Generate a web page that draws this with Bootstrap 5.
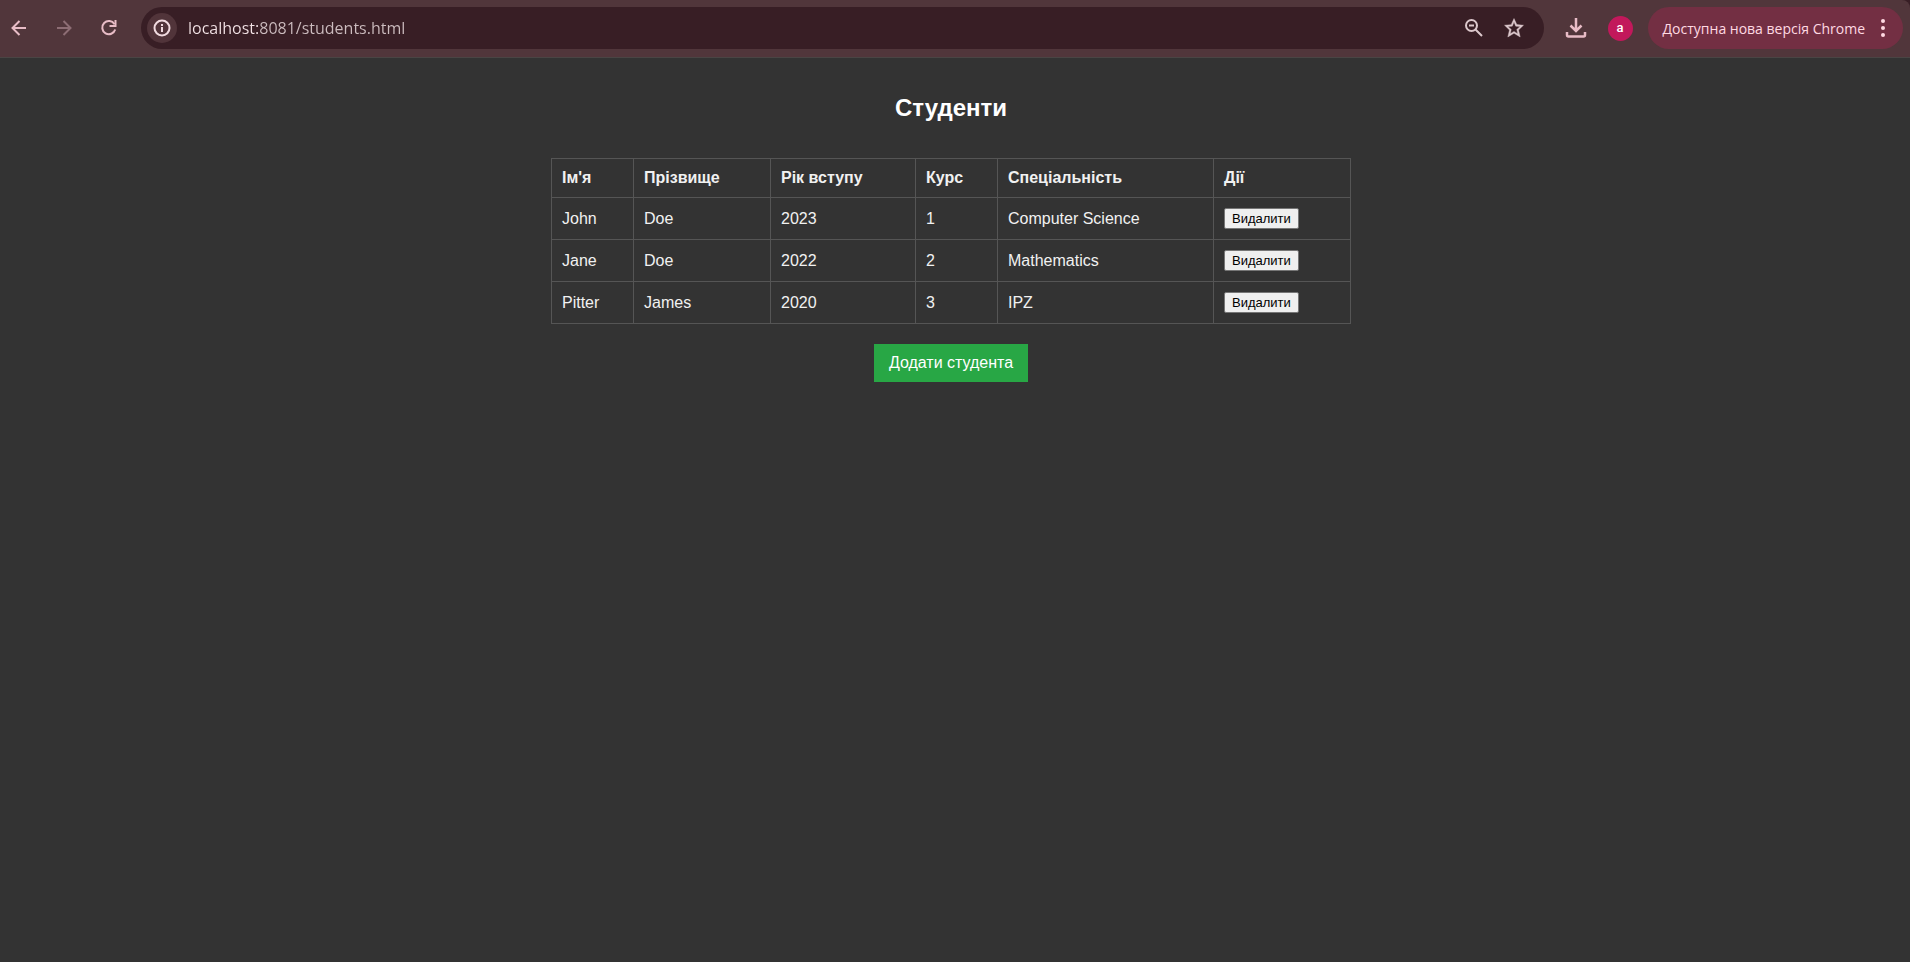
<!DOCTYPE html>
<html lang="uk">
<head>
<meta charset="utf-8">
<meta name="viewport" content="width=device-width, initial-scale=1">
<title>Студенти</title>
<link href="https://cdn.jsdelivr.net/npm/bootstrap@5.3.0/dist/css/bootstrap.min.css" rel="stylesheet">
<style>
body { background: #333; color: #f1f1f1; font-family: "Liberation Sans", Arial, sans-serif; }
svg { display: block; }

/* browser toolbar */
.window-frame { background: #381e25; }
.toolbar { background: #51363b; border-bottom: 1px solid #4a4544; border-radius: 0 8px 0 0; height: 58px; padding: 0 7px 1px; font-family: "Open Sans", "Noto Sans", sans-serif; }
.tool { background: none; border: 0; padding: 0; width: 24px; height: 24px; color: #e8bcc6; flex: none; }
.tool:disabled { color: #8d6d74; }
.nav-tools { gap: 21px; }
.omnibox { background: #381e25; border-radius: 21px; height: 42px; margin: 0 20px; padding: 0 18px 0 6px; }
.site-info { background: #51343a; width: 30px; height: 30px; border-radius: 50%; }
.omnibox .tool { color: #dcc8cc; }
.omnibox .site-info { color: #f0dadf; }
.url { border: 0; outline: 0; padding: 0 0 0 11px; font-size: 16px; line-height: 24px; min-width: 0; color: transparent; background: linear-gradient(to right, #f4e4e7 82px, #cdbdc0 82px); -webkit-background-clip: text; background-clip: text; }
.avatar { background: #c2185b; color: #fff; border: 0; padding: 0; width: 25px; height: 25px; border-radius: 50%; font: 500 13px/24px Roboto, sans-serif; margin: 0 15px 0 20px; }
.update { background: #732f43; color: #ffd9e2; border: 0; border-radius: 21px; height: 42px; padding: 0 8px 0 15px; font-size: 14px; gap: 6px; }

/* page */
.students { width: 800px; max-width: 100%; }
.page { padding: 36px 8px 0 0; }
.page h1 { font-size: 24px; line-height: 28px; font-weight: 700; color: #fff; margin-bottom: 36px; }
.students .table { --bs-table-bg: transparent; --bs-table-color: #f1f1f1; color: #f1f1f1; border-collapse: collapse; border-color: #555; margin-bottom: 20px; table-layout: fixed; }
.students .table th, .students .table td { border: 1px solid #555; padding: 10px; line-height: 18px; }
.students .table td { line-height: 21px; }
.delete { background: #efefef; color: #000; border: 1px solid #767676; border-radius: 2px; font-size: 13px; line-height: 15px; padding: 2px 7px; display: block; height: 21px; }
.add { background: #28a745; color: #fff; border: 0; padding: 10px 15px; font-size: 16px; line-height: 18px; }
</style>
</head>
<body>
<div class="window-frame">
<header class="toolbar d-flex align-items-center">
  <nav class="nav-tools d-flex align-items-center" aria-label="Навігація">
    <button class="tool" type="button" aria-label="Назад"><svg viewBox="0 0 24 24" width="24" height="24" fill="none" stroke="currentColor" stroke-width="2"><path d="M19 12H6M12.500 5L5.500 12l7 7"/></svg></button>
    <button class="tool" type="button" aria-label="Вперед" disabled><svg viewBox="0 0 24 24" width="24" height="24" fill="none" stroke="currentColor" stroke-width="2"><path d="M5 12h13M11.500 5l7 7-7 7"/></svg></button>
    <button class="tool" type="button" aria-label="Оновити"><svg viewBox="0 0 24 24" width="24" height="24" fill="none" stroke="currentColor" stroke-width="2"><path d="M17.500 8.200A6.600 6.600 0 1 0 18.200 13.500"/><path d="M18.500 4v6h-6"/></svg></button>
  </nav>
  <div class="omnibox d-flex align-items-center flex-grow-1">
    <button class="tool site-info d-flex align-items-center justify-content-center" type="button" aria-label="Відомості про сайт"><svg viewBox="0 0 20 20" width="20" height="20" fill="none" stroke="currentColor" stroke-width="2"><circle cx="10" cy="10" r="7.500"/><path d="M10 9v5M10 6v2"/></svg></button>
    <input class="url flex-grow-1" type="text" aria-label="Адреса" value="localhost:8081/students.html">
    <div class="d-flex gap-3">
      <button class="tool" type="button" aria-label="Масштаб"><svg viewBox="0 0 24 24" width="24" height="24" fill="none" stroke="currentColor" stroke-width="2"><circle cx="9.500" cy="9.500" r="5.500"/><path d="M13.500 13.500L20 20M7 9.500h5"/></svg></button>
      <button class="tool" type="button" aria-label="Закладка"><svg viewBox="0 0 24 24" width="24" height="24" fill="currentColor" stroke="currentColor" stroke-width=".4"><path d="M21.500 9.240l-6.690-.62L12 2.500 9.190 8.630 2.500 9.240l4.960 4.730L5.820 21 12 17.270 18.180 21l-1.630-7.030L21.500 9.240zM12 15.400l-3.760 2.270 1-4.280-3.320-2.880 4.380-.38L12 6.100l1.710 4.040 4.380.38-3.320 2.880 1 4.280L12 15.400z"/></svg></button>
    </div>
  </div>
  <div class="d-flex align-items-center">
    <button class="tool" type="button" aria-label="Завантаження"><svg viewBox="0 0 24 24" width="24" height="24" fill="none" stroke="currentColor" stroke-width="2.500"><path d="M12 2v13M6.500 9.500L12 15l5.500-5.500M3 16v3q0 1.500 1.500 1.500h15q1.500 0 1.500-1.500v-3"/></svg></button>
    <button class="avatar" type="button" aria-label="Профіль">a</button>
    <button class="update d-flex align-items-center" type="button">Доступна нова версія Chrome <svg viewBox="0 0 24 24" width="24" height="24" fill="currentColor"><circle cx="12" cy="5" r="2"/><circle cx="12" cy="12" r="2"/><circle cx="12" cy="19" r="2"/></svg></button>
  </div>
</header>
</div>
<main class="page">
  <div class="students mx-auto text-center">
    <h1>Студенти</h1>
    <table class="table text-start">
      <colgroup><col style="width:82px"><col style="width:137px"><col style="width:145px"><col style="width:82px"><col style="width:216px"><col style="width:137px"></colgroup>
      <thead><tr><th>Ім'я</th><th>Прізвище</th><th>Рік вступу</th><th>Курс</th><th>Спеціальність</th><th>Дії</th></tr></thead>
      <tbody>
        <tr><td>John</td><td>Doe</td><td>2023</td><td>1</td><td>Computer Science</td><td><button class="delete" type="button">Видалити</button></td></tr>
        <tr><td>Jane</td><td>Doe</td><td>2022</td><td>2</td><td>Mathematics</td><td><button class="delete" type="button">Видалити</button></td></tr>
        <tr><td>Pitter</td><td>James</td><td>2020</td><td>3</td><td>IPZ</td><td><button class="delete" type="button">Видалити</button></td></tr>
      </tbody>
    </table>
    <button class="add" type="button">Додати студента</button>
  </div>
</main>
<script src="https://cdn.jsdelivr.net/npm/bootstrap@5.3.0/dist/js/bootstrap.bundle.min.js"></script>
</body>
</html>
